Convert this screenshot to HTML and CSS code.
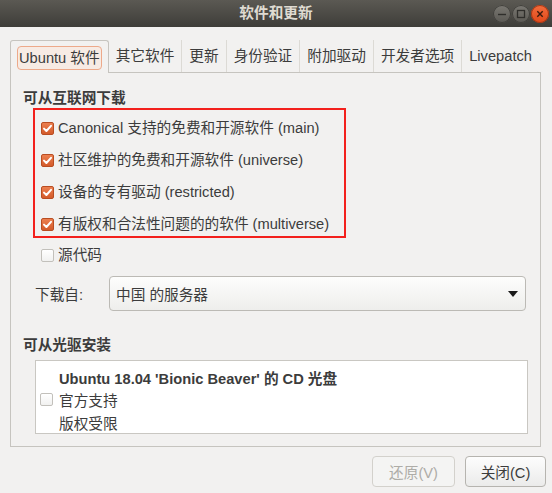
FILE: index.html
```html
<!DOCTYPE html>
<html lang="zh-CN">
<head>
<meta charset="utf-8">
<title>软件和更新</title>
<link rel="stylesheet" href="styles.css">
</head>
<body>
<div class="window">
  <header class="titlebar">
    <div></div>
    <div class="title">软件和更新</div>
    <div class="wm-buttons">
      <span class="wm wm-min"><svg width="18" height="18" viewBox="0 0 18 18"><path d="M5 9.5h8" stroke="#2f2e2b" stroke-width="1.4"/></svg></span>
      <span class="wm wm-max"><svg width="18" height="18" viewBox="0 0 18 18"><rect x="5.5" y="5.5" width="7" height="7" fill="none" stroke="#2f2e2b" stroke-width="1.3"/></svg></span>
      <span class="wm wm-close"><svg width="18" height="18" viewBox="0 0 18 18"><path d="M6.3 6.3l5.4 5.4M11.7 6.3l-5.4 5.4" stroke="#3a1a0e" stroke-width="1.4"/></svg></span>
    </div>
  </header>

  <main class="main">
    <nav class="tabs">
      <div class="tab tab-active"><span class="focus">Ubuntu 软件</span></div>
      <div class="tab">其它软件</div>
      <div class="tab">更新</div>
      <div class="tab">身份验证</div>
      <div class="tab">附加驱动</div>
      <div class="tab">开发者选项</div>
      <div class="tab">Livepatch</div>
    </nav>

    <section class="panel">
      <h2 class="section-title">可从互联网下载</h2>
      <div class="highlight">
        <label class="check-row"><span class="checkbox checked"><svg width="13" height="13" viewBox="0 0 13 13"><path d="M3 6.6L5.4 9 10 3.8" fill="none" stroke="#fff" stroke-width="2" stroke-linecap="round" stroke-linejoin="round"/></svg></span>Canonical 支持的免费和开源软件 (main)</label>
        <label class="check-row"><span class="checkbox checked"><svg width="13" height="13" viewBox="0 0 13 13"><path d="M3 6.6L5.4 9 10 3.8" fill="none" stroke="#fff" stroke-width="2" stroke-linecap="round" stroke-linejoin="round"/></svg></span>社区维护的免费和开源软件 (universe)</label>
        <label class="check-row"><span class="checkbox checked"><svg width="13" height="13" viewBox="0 0 13 13"><path d="M3 6.6L5.4 9 10 3.8" fill="none" stroke="#fff" stroke-width="2" stroke-linecap="round" stroke-linejoin="round"/></svg></span>设备的专有驱动 (restricted)</label>
        <label class="check-row"><span class="checkbox checked"><svg width="13" height="13" viewBox="0 0 13 13"><path d="M3 6.6L5.4 9 10 3.8" fill="none" stroke="#fff" stroke-width="2" stroke-linecap="round" stroke-linejoin="round"/></svg></span>有版权和合法性问题的的软件 (multiverse)</label>
      </div>
      <label class="check-row source-row"><span class="checkbox"></span>源代码</label>

      <div class="download-row">
        <span class="download-label">下载自:</span>
        <div class="combo">
          <span>中国 的服务器</span>
          <svg class="combo-arrow" width="10" height="6" viewBox="0 0 10 6"><path d="M0 0h10L5 6z" fill="#1a1a1a"/></svg>
        </div>
      </div>

      <h2 class="section-title cd-title">可从光驱安装</h2>
      <div class="cd-list">
        <span class="cd-name">Ubuntu 18.04 'Bionic Beaver' 的 CD 光盘</span>
        <span class="checkbox cd-check"></span>
        <span class="cd-line">官方支持</span>
        <span class="cd-line">版权受限</span>
      </div>
    </section>
  </main>

  <footer class="actions">
    <button class="btn" disabled>还原(V)</button>
    <button class="btn btn-close">关闭(C)</button>
  </footer>
</div>
</body>
</html>
```

FILE: styles.css
```css
* {
  box-sizing: border-box;
}

html, body {
  margin: 0;
  padding: 0;
}

body {
  width: 552px;
  height: 493px;
  overflow: hidden;
  background: #f2f1f0;
  font-family: "Liberation Sans", "Noto Sans CJK SC", sans-serif;
  font-size: 14.67px;
  color: #3c3c3c;
}

.window {
  width: 552px;
  height: 493px;
  display: flex;
  flex-direction: column;
}

/* Title bar */
.titlebar {
  height: 27px;
  flex: 0 0 27px;
  display: grid;
  grid-template-columns: 1fr auto 1fr;
  align-items: center;
  background: linear-gradient(#5b5953, #3e3d39);
}

.title {
  color: #dfdbd2;
  font-weight: bold;
  font-size: 14.67px;
  line-height: 27px;
}

.wm-buttons {
  justify-self: end;
  display: flex;
  gap: 1px;
  padding-right: 3px;
}

.wm {
  width: 18px;
  height: 18px;
  border-radius: 50%;
  display: flex;
  align-items: center;
  justify-content: center;
}

.wm-min, .wm-max {
  background: linear-gradient(#7a7872, #5a5853);
  box-shadow: inset 0 0 0 1px #403f3b;
}

.wm-close {
  background: linear-gradient(#f26d3d, #e0481a);
  box-shadow: inset 0 0 0 1px #a43614;
}

/* Main area */
.main {
  padding: 13px 11px 0 10px;
}

.tabs {
  display: flex;
  height: 32px;
  align-items: stretch;
}

.tab {
  padding: 0 7px;
  line-height: 32px;
  white-space: nowrap;
  border-right: 1px solid #dcdad5;
  display: flex;
  align-items: center;
}

.tab:last-child {
  border-right: none;
}

.tab-active {
  padding: 0 6px;
  border: 1px solid #c6c4bf;
  border-bottom: none;
  border-radius: 3px 3px 0 0;
  background: #f2f1f0;
  position: relative;
  margin-bottom: -1px;
  z-index: 1;
}

.focus {
  display: block;
  padding: 0 1px;
  line-height: 22px;
  border: 1px solid #eda98a;
  border-radius: 4px;
  background: #f7ebe4;
  margin-top: 1px;
}

.panel {
  border: 1px solid #c6c4bf;
  padding: 15px 12px 12px 12px;
  display: flex;
  flex-direction: column;
}

.section-title {
  margin: 0;
  font-size: 14.67px;
  font-weight: bold;
  line-height: 20px;
  color: #3c3c3c;
}

.highlight {
  margin-left: 10px;
  width: 313px;
  border: 2px solid #f3201c;
  padding: 8px 0 2px 6px;
  display: flex;
  flex-direction: column;
  gap: 12px;
}

.check-row {
  display: flex;
  align-items: center;
  gap: 4px;
  line-height: 20px;
  white-space: nowrap;
}

.checkbox {
  width: 13px;
  height: 13px;
  flex: 0 0 13px;
  border-radius: 2px;
  border: 1px solid #c2c0bb;
  background: linear-gradient(#ffffff, #f1f1f0);
  display: inline-flex;
}

.checkbox.checked {
  border: 1px solid #b94d22;
  background: linear-gradient(#ec7f4f, #d35b2b);
}

.checkbox.checked svg {
  margin: -1px;
}

.source-row {
  margin: 7px 0 0 18px;
}

.download-row {
  margin: 11px 2px 0 12px;
  display: flex;
  align-items: center;
}

.download-label {
  width: 74px;
  flex: 0 0 74px;
}

.combo {
  flex: 1;
  height: 35px;
  border: 1px solid #bcbab5;
  border-radius: 4px;
  background: linear-gradient(#fdfdfc, #eeeeec);
  display: flex;
  align-items: center;
  justify-content: space-between;
  padding: 0 7px 0 6px;
}

.combo-arrow {
  margin-top: 1px;
}

.cd-title {
  margin-top: 24px;
}

.cd-list {
  margin: 5px 0 0 12px;
  height: 74px;
  border: 1px solid #c9c7c2;
  background: #ffffff;
  padding: 5px 0 0 4px;
  display: grid;
  grid-template-columns: 19px 1fr;
  grid-auto-rows: 22.5px;
  align-items: center;
}

.cd-name {
  grid-column: 2;
  font-weight: bold;
}

.cd-check {
  grid-column: 1;
  grid-row: 2;
}

.cd-line {
  grid-column: 2;
}

/* Actions */
.actions {
  display: flex;
  justify-content: flex-end;
  gap: 10px;
  padding: 9px 6px 0 0;
}

.btn {
  height: 31px;
  font-family: inherit;
  font-size: 14.67px;
  color: #3c3c3c;
  border: 1px solid #b6b4af;
  border-radius: 4px;
  background: linear-gradient(#fdfdfd, #ebebea);
  padding: 0;
  width: 81px;
}

.btn:disabled {
  color: #aeaca7;
  border-color: #d3d1cc;
  background: #f4f4f3;
  width: 83px;
}
```
